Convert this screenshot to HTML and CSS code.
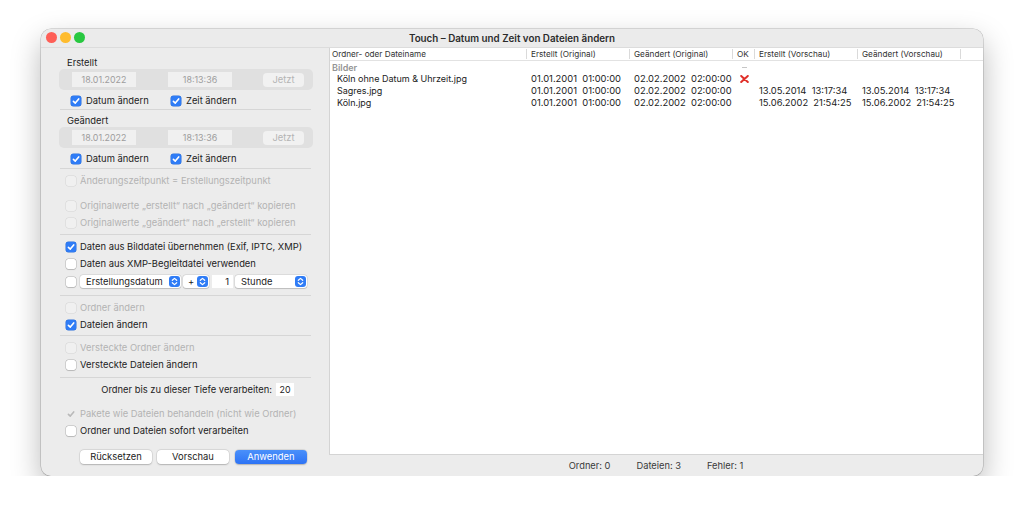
FILE: index.html
```html
<!DOCTYPE html>
<html lang="de">
<head>
    <meta charset="UTF-8">
    <title>Touch – Datum und Zeit von Dateien ändern</title>
    <link rel="stylesheet" href="styles.css">
</head>
<body>
    <div class="window">
        <div class="titlebar">
            <div class="lights">
                <span class="light red"></span>
                <span class="light yellow"></span>
                <span class="light green"></span>
            </div>
            <div class="title">Touch – Datum und Zeit von Dateien ändern</div>
        </div>

        <div class="content">
            <!-- Linke Seite: Einstellungen -->
            <div class="sidebar">
                <div class="group-label">Erstellt</div>
                <div class="group-box">
                    <span class="field date">18.01.2022</span>
                    <span class="field time">18:13:36</span>
                    <span class="btn-now">Jetzt</span>
                </div>
                <div class="pair">
                    <div class="check first"><span class="box on"><svg viewBox="0 0 10 10"><path d="M2.4 5.3 4.3 7.1 7.7 2.9"/></svg></span>Datum ändern</div>
                    <div class="check"><span class="box on"><svg viewBox="0 0 10 10"><path d="M2.4 5.3 4.3 7.1 7.7 2.9"/></svg></span>Zeit ändern</div>
                </div>
                <div class="sep"></div>

                <div class="group-label second">Geändert</div>
                <div class="group-box">
                    <span class="field date">18.01.2022</span>
                    <span class="field time">18:13:36</span>
                    <span class="btn-now">Jetzt</span>
                </div>
                <div class="pair">
                    <div class="check first"><span class="box on"><svg viewBox="0 0 10 10"><path d="M2.4 5.3 4.3 7.1 7.7 2.9"/></svg></span>Datum ändern</div>
                    <div class="check"><span class="box on"><svg viewBox="0 0 10 10"><path d="M2.4 5.3 4.3 7.1 7.7 2.9"/></svg></span>Zeit ändern</div>
                </div>
                <div class="sep top1"></div>

                <div class="row disabled top3"><span class="box"></span>Änderungszeitpunkt = Erstellungszeitpunkt</div>
                <div class="row disabled top8"><span class="box"></span>Originalwerte „erstellt“ nach „geändert“ kopieren</div>
                <div class="row disabled"><span class="box"></span>Originalwerte „geändert“ nach „erstellt“ kopieren</div>
                <div class="sep top3"></div>

                <div class="row top3"><span class="box on"><svg viewBox="0 0 10 10"><path d="M2.4 5.3 4.3 7.1 7.7 2.9"/></svg></span>Daten aus Bilddatei übernehmen (Exif, IPTC, XMP)</div>
                <div class="row"><span class="box"></span>Daten aus XMP-Begleitdatei verwenden</div>
                <div class="row popups">
                    <span class="box"></span>
                    <span class="popup p-field">Erstellungsdatum<span class="stepper"><svg viewBox="0 0 11 11"><path d="M3.3 4.3 5.5 2.4 7.7 4.3M3.3 6.7 5.5 8.6 7.7 6.7"/></svg></span></span>
                    <span class="popup p-sign">+<span class="stepper"><svg viewBox="0 0 11 11"><path d="M3.3 4.3 5.5 2.4 7.7 4.3M3.3 6.7 5.5 8.6 7.7 6.7"/></svg></span></span>
                    <span class="num">1</span>
                    <span class="popup p-unit">Stunde<span class="stepper"><svg viewBox="0 0 11 11"><path d="M3.3 4.3 5.5 2.4 7.7 4.3M3.3 6.7 5.5 8.6 7.7 6.7"/></svg></span></span>
                </div>
                <div class="sep top4"></div>

                <div class="row disabled top3"><span class="box"></span>Ordner ändern</div>
                <div class="row"><span class="box on"><svg viewBox="0 0 10 10"><path d="M2.4 5.3 4.3 7.1 7.7 2.9"/></svg></span>Dateien ändern</div>
                <div class="sep top2"></div>

                <div class="row disabled top3"><span class="box"></span>Versteckte Ordner ändern</div>
                <div class="row"><span class="box"></span>Versteckte Dateien ändern</div>
                <div class="sep top4"></div>

                <div class="depth">Ordner bis zu dieser Tiefe verarbeiten: <span class="depth-field">20</span></div>

                <div class="row disabled top7"><span class="box plain"><svg viewBox="0 0 10 10"><path d="M2.4 5.3 4.3 7.1 7.7 2.9"/></svg></span>Pakete wie Dateien behandeln (nicht wie Ordner)</div>
                <div class="row"><span class="box"></span>Ordner und Dateien sofort verarbeiten</div>

                <div class="buttons">
                    <span class="button">Rücksetzen</span>
                    <span class="button">Vorschau</span>
                    <span class="button primary">Anwenden</span>
                </div>
            </div>

            <!-- Rechte Seite: Dateiliste -->
            <div class="main">
                <div class="list">
                    <div class="list-row head">
                        <span>Ordner- oder Dateiname</span>
                        <span>Erstellt (Original)</span>
                        <span>Geändert (Original)</span>
                        <span>OK</span>
                        <span>Erstellt (Vorschau)</span>
                        <span>Geändert (Vorschau)</span>
                        <span></span>
                    </div>
                    <div class="list-row group">
                        <span>Bilder</span>
                        <span></span>
                        <span></span>
                        <span class="ok"><i class="dash"></i></span>
                        <span></span>
                        <span></span>
                        <span></span>
                    </div>
                    <div class="list-row">
                        <span class="name">Köln ohne Datum &amp; Uhrzeit.jpg</span>
                        <span class="stamp">01.01.2001&nbsp;&nbsp;01:00:00</span>
                        <span class="stamp">02.02.2002&nbsp;&nbsp;02:00:00</span>
                        <span class="ok"><svg class="cross" viewBox="0 0 9 8"><path d="M1.2 1 7.8 7M7.8 1 1.2 7"/></svg></span>
                        <span></span>
                        <span></span>
                        <span></span>
                    </div>
                    <div class="list-row">
                        <span class="name">Sagres.jpg</span>
                        <span class="stamp">01.01.2001&nbsp;&nbsp;01:00:00</span>
                        <span class="stamp">02.02.2002&nbsp;&nbsp;02:00:00</span>
                        <span class="ok"></span>
                        <span class="stamp">13.05.2014&nbsp;&nbsp;13:17:34</span>
                        <span class="stamp">13.05.2014&nbsp;&nbsp;13:17:34</span>
                        <span></span>
                    </div>
                    <div class="list-row">
                        <span class="name">Köln.jpg</span>
                        <span class="stamp">01.01.2001&nbsp;&nbsp;01:00:00</span>
                        <span class="stamp">02.02.2002&nbsp;&nbsp;02:00:00</span>
                        <span class="ok"></span>
                        <span class="stamp">15.06.2002&nbsp;&nbsp;21:54:25</span>
                        <span class="stamp">15.06.2002&nbsp;&nbsp;21:54:25</span>
                        <span></span>
                    </div>
                </div>
                <div class="status">
                    <span>Ordner: 0</span>
                    <span>Dateien: 3</span>
                    <span>Fehler: 1</span>
                </div>
            </div>
        </div>
    </div>
</body>
</html>
```

FILE: styles.css
```css
body {
    margin: 0;
    background: #ffffff;
    font-family: "Inter", "Noto Sans", sans-serif;
    font-size: 9.4px;
    color: #222222;
}
.window {
    margin: 29px 0 0 41px;
    width: 942px;
    height: 447px;
    background: #ececec;
    border-radius: 10px;
    overflow: hidden;
    box-shadow: 0 0 0 0.5px rgba(0, 0, 0, 0.25), 0 12px 30px rgba(0, 0, 0, 0.28);
    display: flex;
    flex-direction: column;
}
.titlebar {
    height: 18px;
    border-bottom: 1px solid #dcdcdc;
    display: flex;
    align-items: center;
    position: relative;
    background: #ebebeb;
}
.lights {
    display: flex;
    gap: 2.5px;
    padding-left: 4.5px;
    position: absolute;
    left: 0;
    top: 2.5px;
}
.light {
    width: 11.5px;
    height: 11.5px;
    border-radius: 50%;
    display: inline-block;
}
.red { background: #fe5f57; }
.yellow { background: #febc2e; }
.green { background: #28c840; }
.title {
    flex: 1;
    text-align: center;
    font-weight: 600;
    font-size: 9.8px;
    color: #2b2b2b;
}
.content {
    flex: 1;
    display: flex;
    min-height: 0;
}

/* Einstellungen */
.sidebar {
    width: 254px;
    padding: 9px 16px 0 18px;
    flex-shrink: 0;
    white-space: nowrap;
}
.group-label {
    line-height: 12px;
    height: 12px;
    padding-left: 8px;
}
.group-label.second {
    margin-top: 5px;
}
.group-box {
    height: 21px;
    background: #e0e0e0;
    border-radius: 5px;
    display: flex;
    align-items: center;
    padding-left: 13px;
    box-sizing: border-box;
}
.field {
    width: 64px;
    height: 15px;
    line-height: 15px;
    background: #f0f0f0;
    color: #9d9d9d;
    text-align: center;
    font-size: 8.9px;
}
.field.time {
    margin-left: 32px;
}
.btn-now {
    width: 41px;
    height: 14px;
    line-height: 14px;
    margin-left: 31px;
    background: #f1f1f1;
    border-radius: 4px;
    text-align: center;
    color: #b4b4b4;
}
.pair {
    display: flex;
    height: 17px;
    margin-top: 2px;
    padding-left: 12px;
}
.check {
    display: flex;
    align-items: center;
}
.check.first {
    width: 100px;
}
.box {
    width: 10px;
    height: 10px;
    border-radius: 2.5px;
    background: #ffffff;
    box-shadow: 0 0 0 0.5px rgba(0, 0, 0, 0.22), 0 0.5px 1px rgba(0, 0, 0, 0.12);
    margin-right: 5px;
    flex-shrink: 0;
    display: inline-flex;
}
.box svg {
    width: 10px;
    height: 10px;
}
.box svg path {
    fill: none;
    stroke: #ffffff;
    stroke-width: 1.6;
    stroke-linecap: round;
    stroke-linejoin: round;
}
.box.on {
    background: #2f7cf6;
    box-shadow: 0 0 0 0.5px #2a6fd9;
}
.box.plain {
    background: transparent;
    box-shadow: none;
}
.box.plain svg path {
    stroke: #b9b9b9;
}
.sep {
    height: 1px;
    background: #d6d6d6;
    margin: 0 2px 0 1px;
}
.row {
    height: 17px;
    display: flex;
    align-items: center;
    padding-left: 7px;
}
.row .box {
    margin-right: 4px;
}
.row.disabled {
    color: #b3b3b3;
}
.row.disabled .box {
    background: #f0f0f0;
    box-shadow: 0 0 0 0.5px rgba(0, 0, 0, 0.1);
}
.row.disabled .box.plain {
    background: transparent;
    box-shadow: none;
}
.sep.top1 { margin-top: 1px; }
.sep.top2 { margin-top: 2px; }
.sep.top3 { margin-top: 3px; }
.sep.top4 { margin-top: 4px; }
.top3 { margin-top: 3px; }
.top7 { margin-top: 7px; }
.top8 { margin-top: 8px; }

.row.popups {
    height: 19px;
}
.popup {
    height: 13px;
    background: #ffffff;
    border-radius: 3px;
    box-shadow: 0 0 0 0.5px rgba(0, 0, 0, 0.12), 0 0.5px 1px rgba(0, 0, 0, 0.15);
    display: flex;
    align-items: center;
    justify-content: space-between;
    padding: 0 1.5px 0 6px;
    box-sizing: border-box;
}
.p-field {
    width: 101px;
}
.p-sign {
    width: 26px;
    margin-left: 2px;
    padding-left: 5px;
}
.p-unit {
    width: 72px;
    margin-left: 2px;
}
.stepper {
    width: 11px;
    height: 11px;
    border-radius: 3px;
    background: #2f7cf6;
    display: inline-flex;
}
.stepper svg {
    width: 11px;
    height: 11px;
}
.stepper svg path {
    fill: none;
    stroke: #ffffff;
    stroke-width: 1.2;
    stroke-linecap: round;
    stroke-linejoin: round;
}
.num {
    width: 21px;
    height: 13px;
    line-height: 13px;
    margin-left: 3px;
    background: #ffffff;
    text-align: right;
    padding-right: 4px;
    box-sizing: border-box;
}
.depth {
    height: 17px;
    margin-top: 3px;
    display: flex;
    align-items: center;
    justify-content: flex-end;
    padding-right: 19px;
}
.depth-field {
    width: 18px;
    height: 13px;
    line-height: 13px;
    background: #ffffff;
    text-align: center;
    margin-left: 4px;
    font-size: 8.9px;
}
.buttons {
    display: flex;
    margin-top: 11px;
    padding-left: 21px;
    gap: 4px;
}
.button {
    width: 72px;
    height: 14px;
    line-height: 14px;
    background: #ffffff;
    border-radius: 4px;
    text-align: center;
    box-shadow: 0 0 0 0.5px rgba(0, 0, 0, 0.1), 0 0.5px 1.5px rgba(0, 0, 0, 0.2);
}
.button + .button {
    margin-left: 1px;
}
.button.primary {
    background: linear-gradient(#4a90fa, #2d73f5);
    color: #ffffff;
    margin-left: 2px;
}

/* Dateiliste */
.main {
    flex: 1;
    display: flex;
    flex-direction: column;
}
.list {
    flex: 1;
    background: #ffffff;
    border-left: 1px solid #d4d4d4;
    border-bottom: 1px solid #d4d4d4;
    font-size: 9px;
}
.list-row {
    display: grid;
    grid-template-columns: 197px 103px 103px 22px 103px 103px 1fr;
    height: 11.8px;
    line-height: 11.8px;
    white-space: nowrap;
}
.list-row span {
    padding-left: 4px;
    overflow: hidden;
}
.list-row span:first-child {
    padding-left: 2px;
}
.list-row .name {
    padding-left: 7px !important;
}
.list-row .stamp {
    font-size: 9.4px;
}
.list-row.head {
    height: 12px;
    line-height: 12px;
    border-bottom: 1px solid #e2e2e2;
    color: #333333;
    font-size: 8.2px;
}
.list-row.head span {
    border-right: 1px solid #dadada;
    margin: 1px 0;
    line-height: 11px;
}
.list-row.head span:last-child {
    border-right: none;
}
.list-row.group {
    color: #959595;
    font-weight: 600;
    font-size: 9px;
    padding-top: 0.5px;
}
.ok {
    position: relative;
}
.dash {
    position: absolute;
    left: 9px;
    top: 5px;
    width: 5px;
    height: 1px;
    background: #c6c6c6;
}
.cross {
    position: absolute;
    left: 7px;
    top: 2px;
    width: 9px;
    height: 8px;
}
.cross path {
    stroke: #e0302a;
    stroke-width: 2;
    stroke-linecap: round;
    fill: none;
}
.status {
    height: 21px;
    display: flex;
    justify-content: center;
    align-items: center;
    gap: 26px;
    color: #3a3a3a;
    font-size: 9.3px;
}
```
